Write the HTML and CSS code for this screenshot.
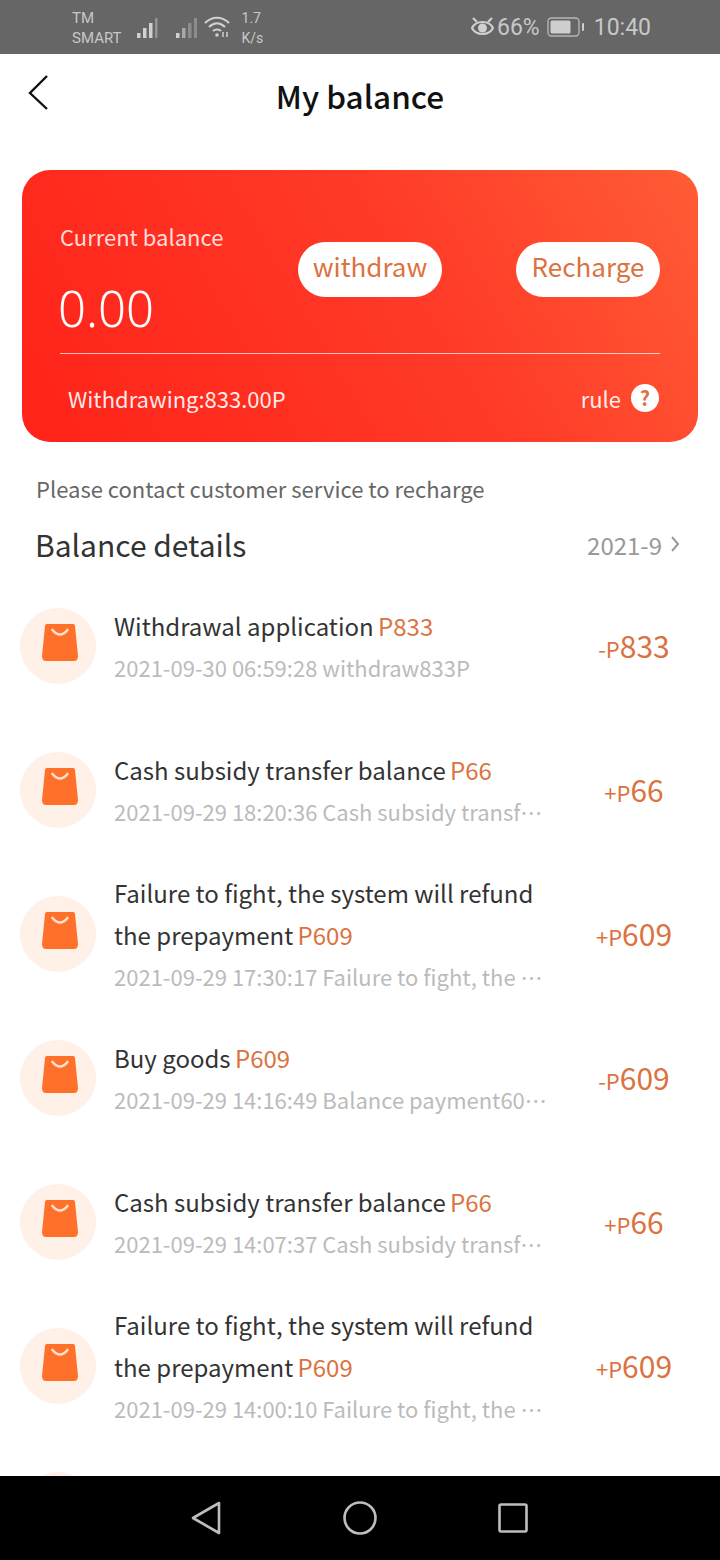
FILE: index.html
```html
<!DOCTYPE html>
<html lang="en">
<head>
    <meta charset="UTF-8">
    <meta name="viewport" content="width=device-width, initial-scale=1.0">
    <title>My balance</title>
    <link rel="stylesheet" href="styles.css">
</head>
<body>
    <div class="page">
        <div class="statusBar">
            <div class="statusLeft">
                <div class="carrier"><span>TM</span><span>SMART</span></div>
                <svg class="signal" width="22" height="22" viewBox="0 0 22 22"><rect x="0" y="16" width="3.500" height="5" fill="#d0d0d0"/><rect x="6" y="11" width="3.500" height="10" fill="#d0d0d0"/><rect x="12" y="6" width="3.500" height="15" fill="#d0d0d0"/><rect x="18" y="1" width="2.500" height="20" fill="#939393"/></svg>
                <svg class="signal second" width="23" height="22" viewBox="0 0 23 22"><rect x="0" y="16" width="3.500" height="5" fill="#d0d0d0"/><rect x="6" y="11" width="3.500" height="10" fill="#a8a8a8"/><rect x="12" y="6" width="3.500" height="15" fill="#8c8c8c"/><rect x="18" y="1" width="3" height="20" fill="#8c8c8c"/></svg>
                <svg class="wifi" width="26" height="22" viewBox="0 0 26 22" fill="none" stroke="#d0d0d0" stroke-width="2.200"><path d="M1 7C8 0 18 0 25 7"/><path d="M5 11C10 6 16 6 21 11"/><path d="M9 15C11 13 15 13 17 15"/><circle cx="13" cy="19" r="1.800" fill="#d0d0d0" stroke="none"/><path d="M19 16v5M23 16v5" stroke-width="1.500"/></svg>
                <div class="speed"><span>1.7</span><span>K/s</span></div>
            </div>
            <div class="statusRight">
                <svg width="23" height="20" viewBox="0 0 23 20" fill="none" stroke="#d0d0d0" stroke-width="2.200"><path d="M2 1l4 4M21 1l-4 4"/><path d="M1 11C5 3 18 3 22 11C18 19 5 19 1 11Z"/><circle cx="11.500" cy="11" r="4.500" fill="#d0d0d0" stroke="none"/></svg>
                <span class="statusText percent">66%</span>
                <svg class="battery" width="37" height="20" viewBox="0 0 37 20"><rect x="1" y="1" width="31" height="18" rx="3.500" fill="none" stroke="#b5b5b5" stroke-width="1.400"/><rect x="3.500" y="3.500" width="20" height="13" rx="1.500" fill="#cfcfcf"/><rect x="35" y="6" width="2" height="8" rx="1" fill="#cfcfcf"/></svg>
                <span class="statusText clock">10:40</span>
            </div>
        </div>

        <div class="header">
            <svg class="backIcon" width="24" height="38" viewBox="0 0 24 38" fill="none" stroke="#111" stroke-width="2.400"><path d="M21 2L4 19L21 35"/></svg>
            <div class="headerTitle">My balance</div>
        </div>

        <div class="card">
            <div class="cardTop">
                <div class="cardBalance">
                    <div class="balanceLabel">Current balance</div>
                    <div class="balanceValue">0.00</div>
                </div>
                <div class="cardBtns">
                    <button class="pill">withdraw</button>
                    <button class="pill">Recharge</button>
                </div>
            </div>
            <div class="cardBottom">
                <span>Withdrawing:833.00P</span>
                <div class="ruleBox">
                    <span>rule</span>
                    <span class="ruleIcon">?</span>
                </div>
            </div>
        </div>

        <div class="note">Please contact customer service to recharge</div>
        <div class="detailsHead">
            <div class="detailsTitle">Balance details</div>
            <div class="detailsDate">
                <span>2021-9</span>
                <svg width="10" height="16" viewBox="0 0 10 16" fill="none" stroke="#999" stroke-width="2"><path d="M2 1l6 7l-6 7"/></svg>
            </div>
        </div>

        <div class="list">
            <div class="row">
                <div class="rowIcon"><svg class="bag" width="36" height="37" viewBox="0 0 36 37"><path d="M5 0H31Q33 0 33 2L36 32Q36 37 32 37H4Q0 37 0 32L3 2Q3 0 5 0Z" fill="#ff702b"/><path d="M10.500 6Q18 15 25.500 6" fill="none" stroke="#fde3cf" stroke-width="2.600" stroke-linecap="round"/></svg></div>
                <div class="rowText">
                    <div class="rowTitle">Withdrawal application <span class="hl">P833</span></div>
                    <div class="rowSub">2021-09-30 06:59:28 withdraw833P</div>
                </div>
                <div class="rowAmount"><small>-P</small>833</div>
            </div>
            <div class="row">
                <div class="rowIcon"><svg class="bag" width="36" height="37" viewBox="0 0 36 37"><path d="M5 0H31Q33 0 33 2L36 32Q36 37 32 37H4Q0 37 0 32L3 2Q3 0 5 0Z" fill="#ff702b"/><path d="M10.500 6Q18 15 25.500 6" fill="none" stroke="#fde3cf" stroke-width="2.600" stroke-linecap="round"/></svg></div>
                <div class="rowText">
                    <div class="rowTitle">Cash subsidy transfer balance <span class="hl">P66</span></div>
                    <div class="rowSub">2021-09-29 18:20:36 Cash subsidy transfer balance66P</div>
                </div>
                <div class="rowAmount"><small>+P</small>66</div>
            </div>
            <div class="row">
                <div class="rowIcon"><svg class="bag" width="36" height="37" viewBox="0 0 36 37"><path d="M5 0H31Q33 0 33 2L36 32Q36 37 32 37H4Q0 37 0 32L3 2Q3 0 5 0Z" fill="#ff702b"/><path d="M10.500 6Q18 15 25.500 6" fill="none" stroke="#fde3cf" stroke-width="2.600" stroke-linecap="round"/></svg></div>
                <div class="rowText">
                    <div class="rowTitle">Failure to fight, the system will refund the prepayment <span class="hl">P609</span></div>
                    <div class="rowSub">2021-09-29 17:30:17 Failure to fight, the system will refund</div>
                </div>
                <div class="rowAmount"><small>+P</small>609</div>
            </div>
            <div class="row">
                <div class="rowIcon"><svg class="bag" width="36" height="37" viewBox="0 0 36 37"><path d="M5 0H31Q33 0 33 2L36 32Q36 37 32 37H4Q0 37 0 32L3 2Q3 0 5 0Z" fill="#ff702b"/><path d="M10.500 6Q18 15 25.500 6" fill="none" stroke="#fde3cf" stroke-width="2.600" stroke-linecap="round"/></svg></div>
                <div class="rowText">
                    <div class="rowTitle">Buy goods <span class="hl">P609</span></div>
                    <div class="rowSub">2021-09-29 14:16:49 Balance payment609P for goods</div>
                </div>
                <div class="rowAmount"><small>-P</small>609</div>
            </div>
            <div class="row">
                <div class="rowIcon"><svg class="bag" width="36" height="37" viewBox="0 0 36 37"><path d="M5 0H31Q33 0 33 2L36 32Q36 37 32 37H4Q0 37 0 32L3 2Q3 0 5 0Z" fill="#ff702b"/><path d="M10.500 6Q18 15 25.500 6" fill="none" stroke="#fde3cf" stroke-width="2.600" stroke-linecap="round"/></svg></div>
                <div class="rowText">
                    <div class="rowTitle">Cash subsidy transfer balance <span class="hl">P66</span></div>
                    <div class="rowSub">2021-09-29 14:07:37 Cash subsidy transfer balance66P</div>
                </div>
                <div class="rowAmount"><small>+P</small>66</div>
            </div>
            <div class="row">
                <div class="rowIcon"><svg class="bag" width="36" height="37" viewBox="0 0 36 37"><path d="M5 0H31Q33 0 33 2L36 32Q36 37 32 37H4Q0 37 0 32L3 2Q3 0 5 0Z" fill="#ff702b"/><path d="M10.500 6Q18 15 25.500 6" fill="none" stroke="#fde3cf" stroke-width="2.600" stroke-linecap="round"/></svg></div>
                <div class="rowText">
                    <div class="rowTitle">Failure to fight, the system will refund the prepayment <span class="hl">P609</span></div>
                    <div class="rowSub">2021-09-29 14:00:10 Failure to fight, the system will refund</div>
                </div>
                <div class="rowAmount"><small>+P</small>609</div>
            </div>
            <div class="row">
                <div class="rowIcon"></div>
            </div>
        </div>

        <div class="navBar">
            <svg width="32" height="34" viewBox="0 0 32 34" fill="none" stroke="#bdbdbd" stroke-width="2.600" stroke-linejoin="round"><path d="M29 2V32L3 17Z"/></svg>
            <svg width="34" height="34" viewBox="0 0 34 34" fill="none" stroke="#bdbdbd" stroke-width="2.600"><circle cx="17" cy="17" r="15.500"/></svg>
            <svg width="30" height="30" viewBox="0 0 30 30" fill="none" stroke="#bdbdbd" stroke-width="2.600" stroke-linejoin="round"><rect x="1.500" y="1.500" width="27" height="27" rx="1.500"/></svg>
        </div>
    </div>
</body>
</html>
```

FILE: styles.css
```css
* {
    box-sizing: border-box;
}
html, body {
    margin: 0;
    padding: 0;
}
body {
    font-family: "Noto Sans CJK SC", "Noto Sans", sans-serif;
    background: #fff;
}
.page {
    width: 720px;
    height: 1560px;
    display: flex;
    flex-direction: column;
    overflow: hidden;
}

/* status bar */
.statusBar {
    height: 54px;
    flex-shrink: 0;
    background: #666;
    color: #c8c8c8;
    display: flex;
    align-items: center;
    justify-content: space-between;
    padding: 0 69px 0 72px;
}
.statusLeft, .statusRight {
    display: flex;
    align-items: center;
}
.carrier, .speed {
    display: flex;
    flex-direction: column;
    font-family: "Roboto", sans-serif;
    font-size: 15px;
    line-height: 20px;
    padding-top: 2px;
}
.signal {
    margin: 2px 0 0 15px;
}
.signal.second {
    margin-left: 17px;
}
.wifi {
    margin: 0 0 0 5px;
}
.speed {
    margin-left: 12px;
    align-items: flex-start;
    font-size: 14px;
}
.statusText {
    font-family: "Roboto", sans-serif;
    font-size: 23px;
}
.percent {
    margin-left: 3px;
}
.battery {
    margin-left: 7px;
}
.clock {
    margin-left: 10px;
}

/* header */
.header {
    height: 86px;
    flex-shrink: 0;
    display: flex;
    align-items: center;
    justify-content: center;
    position: relative;
}
.backIcon {
    position: absolute;
    left: 26px;
    top: 20px;
}
.headerTitle {
    font-size: 31.500px;
    font-weight: 500;
    color: #111;
    padding-bottom: 4px;
}

/* card */
.card {
    margin: 30px 22px 0;
    height: 272px;
    flex-shrink: 0;
    border-radius: 28px;
    background: linear-gradient(60deg, #ff2219, #ff3a28 58%, #ff5c35);
    padding: 0 38px;
    color: #fff;
    display: flex;
    flex-direction: column;
}
.cardTop {
    height: 184px;
    flex-shrink: 0;
    border-bottom: 1px solid rgba(255, 255, 255, 0.7);
    display: flex;
    justify-content: space-between;
    padding-top: 48px;
}
.balanceLabel {
    font-size: 22px;
    line-height: 36px;
    color: rgba(255, 255, 255, 0.85);
}
.balanceValue {
    font-family: "Noto Sans", sans-serif;
    font-size: 49px;
    font-weight: 300;
    line-height: 60px;
    margin: 24px 0 0 -2px;
}
.cardBtns {
    display: flex;
    gap: 74px;
    padding-top: 24px;
    height: 80px;
}
.pill {
    width: 144px;
    height: 55px;
    border: none;
    border-radius: 28px;
    background: #fff;
    color: #dc7240;
    font-family: inherit;
    font-size: 26px;
    padding: 0 0 8px;
}
.cardBottom {
    flex: 1;
    display: flex;
    align-items: center;
    justify-content: space-between;
    font-size: 22px;
    padding: 0 0 0 8px;
    color: rgba(255, 255, 255, 0.92);
}
.ruleBox {
    display: flex;
    align-items: center;
    gap: 10px;
}
.ruleIcon {
    width: 28px;
    height: 28px;
    border-radius: 50%;
    background: #fff;
    color: #dc7240;
    font-size: 20px;
    font-weight: 700;
    line-height: 28px;
    text-align: center;
    margin-right: 1px;
}

/* details */
.note {
    margin: 30px 36px 0;
    font-size: 22px;
    line-height: 32px;
    color: #666;
}
.detailsHead {
    margin: 16px 40px 0 35px;
    height: 48px;
    flex-shrink: 0;
    display: flex;
    align-items: center;
    justify-content: space-between;
}
.detailsTitle {
    font-size: 30px;
    color: #333;
}
.detailsDate {
    display: flex;
    align-items: center;
    gap: 8px;
    font-size: 24px;
    color: #999;
}

/* list */
.list {
    flex: 1;
    overflow: hidden;
    margin-top: 6px;
}
.row {
    height: 144px;
    display: flex;
    align-items: center;
    padding-left: 20px;
}
.rowIcon {
    width: 76px;
    height: 76px;
    flex-shrink: 0;
    border-radius: 50%;
    background: #fff1e8;
    display: flex;
    align-items: center;
    justify-content: center;
}
.bag {
    margin: 0 0 8px 4px;
}
.rowText {
    width: 438px;
    margin-left: 18px;
    flex-shrink: 0;
}
.rowTitle {
    font-size: 24px;
    line-height: 42px;
    color: #333;
}
.hl {
    color: #dc7240;
    margin-left: -1px;
}
.rowSub {
    font-size: 22px;
    line-height: 41px;
    color: #bbb;
    white-space: nowrap;
    overflow: hidden;
    text-overflow: ellipsis;
}
.rowAmount {
    flex: 1;
    margin-left: -4px;
    text-align: center;
    font-size: 30px;
    line-height: 42px;
    color: #dc7240;
}
.rowAmount small {
    font-size: 22px;
}

/* nav bar */
.navBar {
    height: 84px;
    flex-shrink: 0;
    background: #000;
    display: flex;
    align-items: center;
    justify-content: center;
    gap: 121px;
    padding-right: 3px;
}
```
